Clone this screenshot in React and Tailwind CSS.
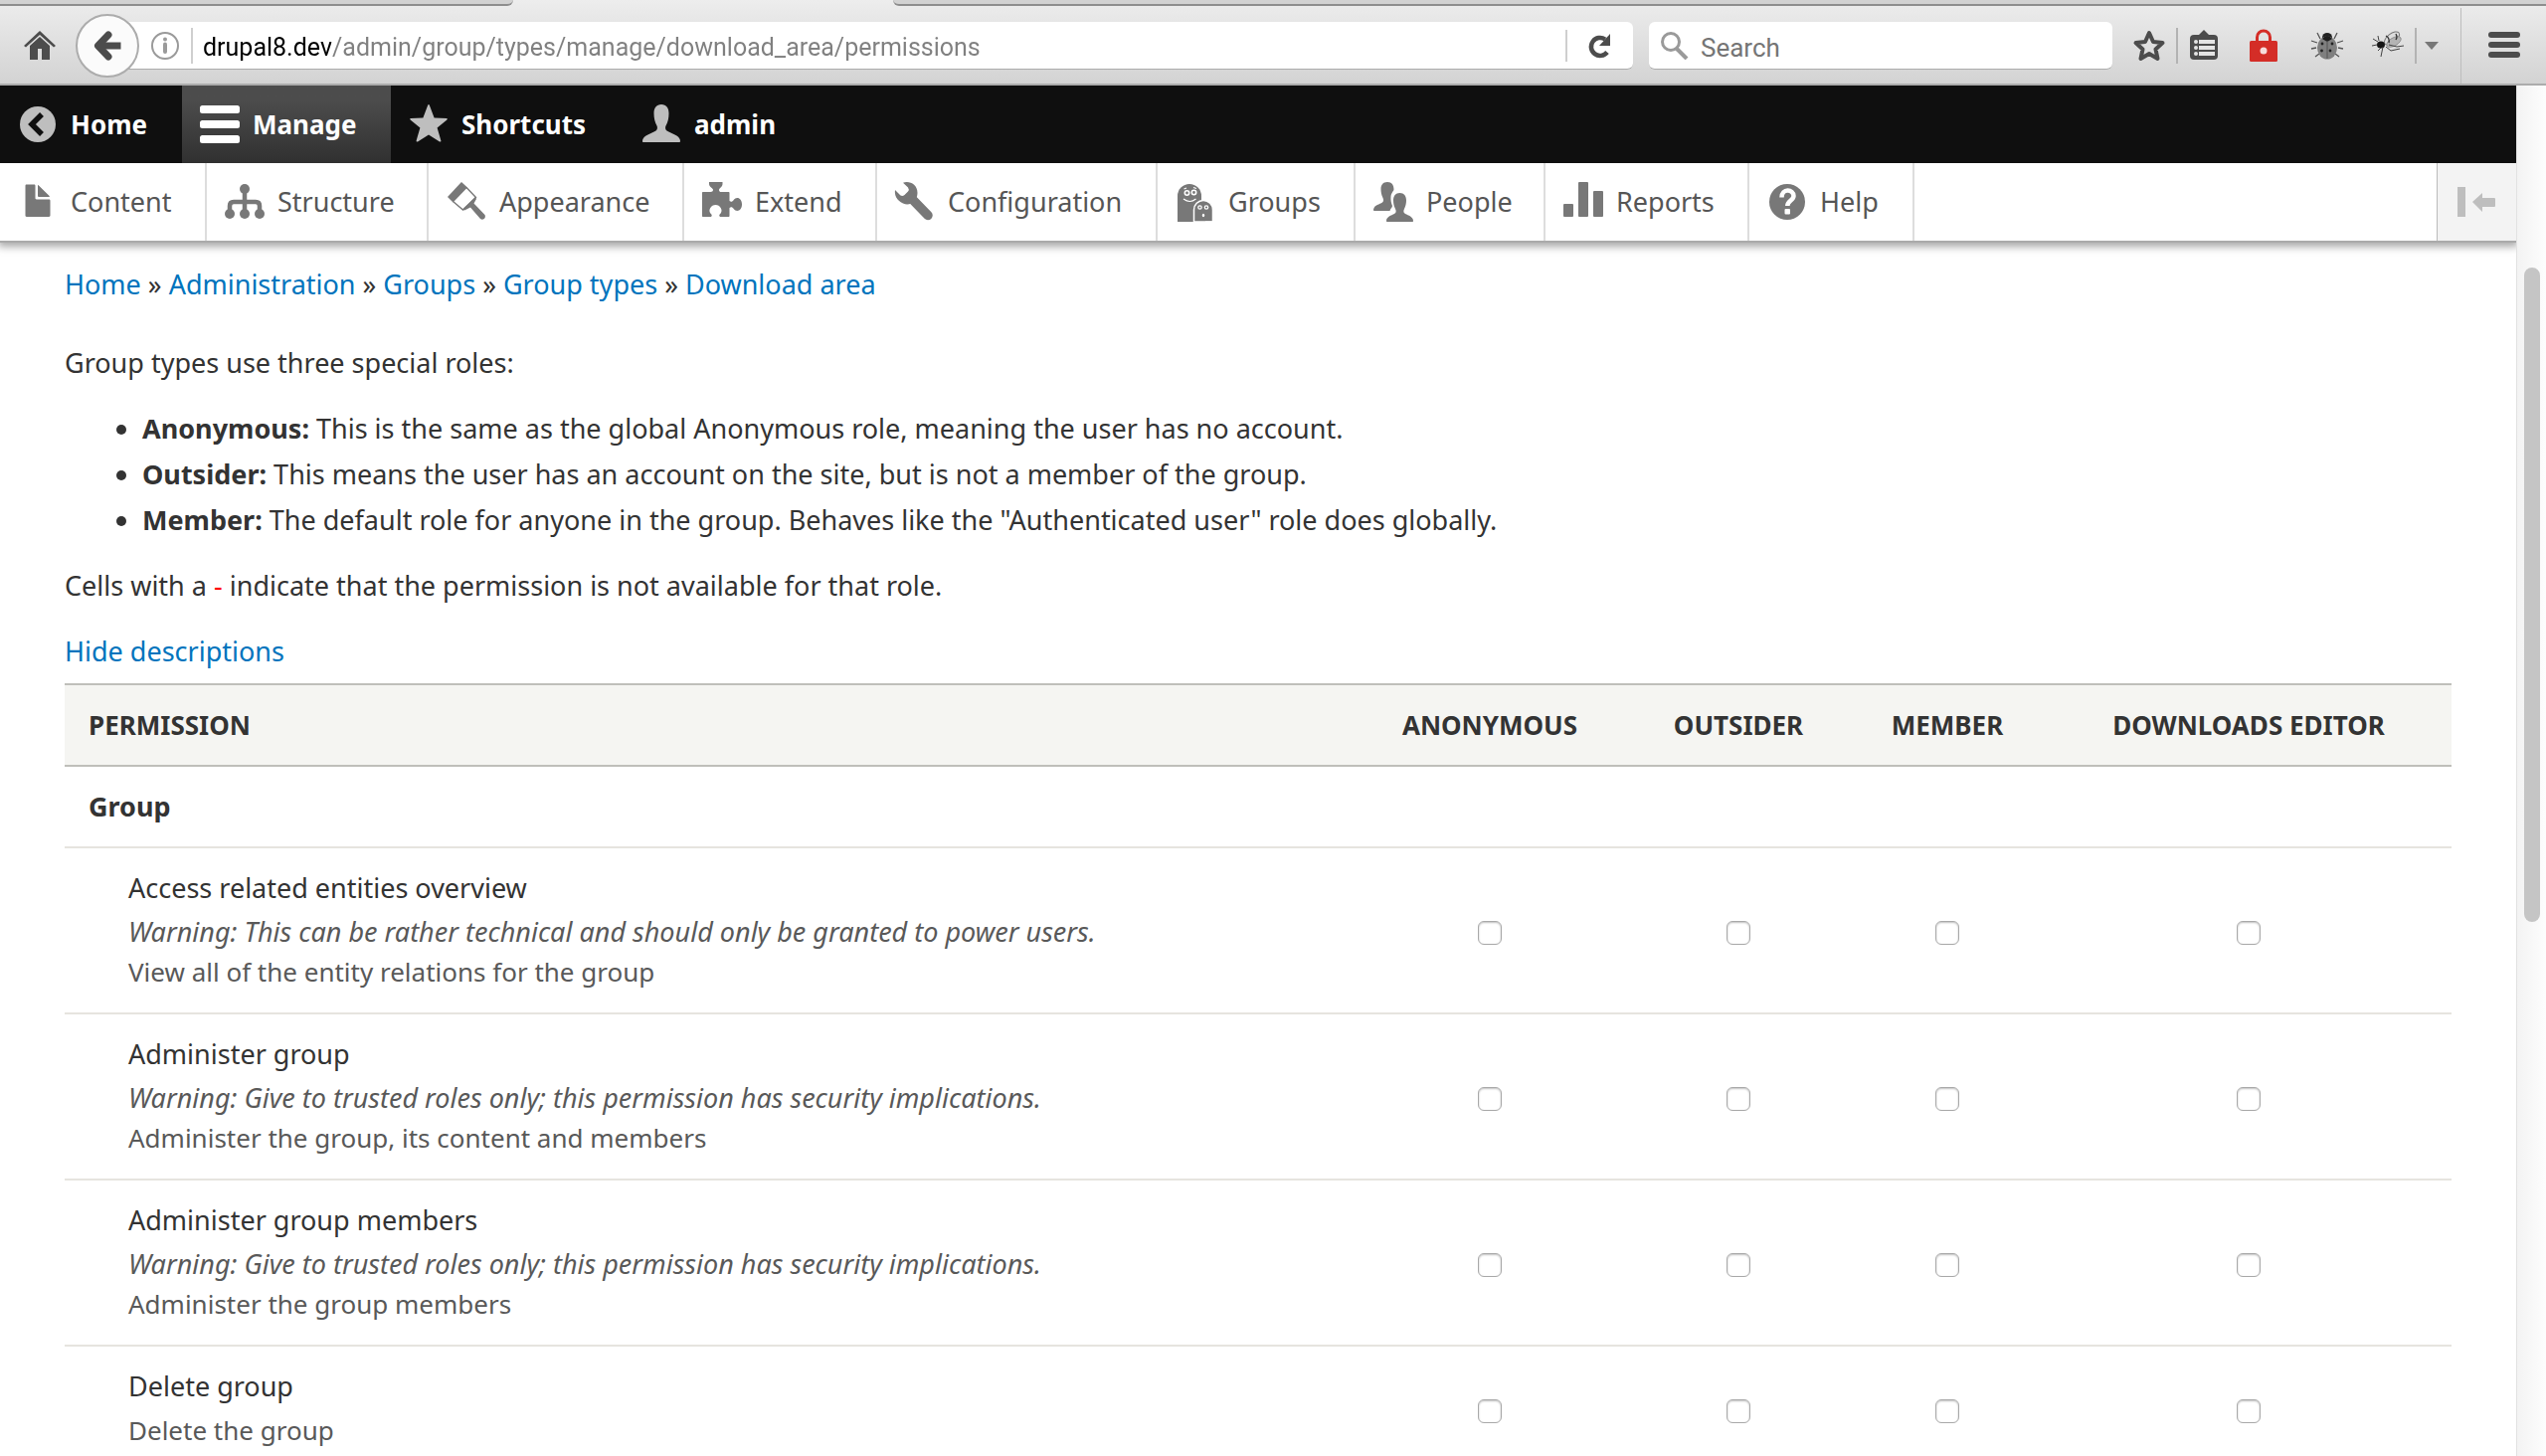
// Group type permissions page inside a browser window
import { useState } from 'react';

const ICONS = {
  back: (
    <>
      <circle cx="20" cy="20" r="18" />
      <path d="M24 10 14 20l10 10" fill="none" stroke="#0f0f0f" strokeWidth="5.5" />
    </>
  ),
  menu: (
    <>
      <rect x="0" y="1" width="40" height="8" rx="2.5" />
      <rect x="0" y="16" width="40" height="8" rx="2.5" />
      <rect x="0" y="31" width="40" height="8" rx="2.5" />
    </>
  ),
  star: <path d="M19.2.8Q20-.6 20.8.8L25.600 13.500 38 14q1.600.400.400 1.600L28.600 23.500 32.400 36.500q.2 1.600-1.400.9L20 30.500 9 37.400q-1.600.7-1.400-.9L11.400 23.500 1.600 15.600Q.4 14.400 2 14l12.400-.5z" />,
  user: <path d="M20 0c5 0 7.500 3.500 7.500 9 0 5-1 9-3 12.500-.8 1.500-.5 4 1 5 3 2 7 3 10 5 2.500 1.700 3.500 3.500 3.500 5.500 0 .7-.5 1-1 1H2c-.7 0-1-.4-1-1 0-2 1-3.800 3.500-5.500 3-2 7-3 10-5 1.500-1 1.800-3.500 1-5-2-3.500-3-7.500-3-12.500 0-5.500 2.500-9 7.500-9z" />,
  file: <path d="M31.200 17.500H18.700c-.7 0-1.200-.5-1.200-1.200V3.700c0-.7-.5-1.200-1.200-1.200H8.700c-.7 0-1.200.5-1.200 1.200v30.100c0 .7.5 1.200 1.200 1.200h22.500c.7 0 1.300-.5 1.300-1.200V18.700c0-.7-.6-1.200-1.300-1.200zM21.200 15h10c.7 0 .9-.4.400-.9L20.900 3.400c-.5-.5-.9-.3-.9.300v10c0 .8.600 1.300 1.200 1.300z" />,
  chart: (
    <>
      <path d="M5 32v-8q0-4 4-4h22q4 0 4 4v8M20 7v25" fill="none" stroke="currentColor" strokeWidth="4.500" />
      <circle cx="20" cy="7" r="5" />
      <circle cx="5" cy="32" r="5" />
      <circle cx="20" cy="32" r="5" />
      <circle cx="35" cy="32" r="5" />
    </>
  ),
  brush: (
    <>
      <path d="M15 0 21 5.500 6.500 20.500 1 15z" />
      <path d="M6.500 19.500 16.500 28 29.500 15.500 20 5.500" fill="none" stroke="currentColor" strokeWidth="1.400" />
      <path d="M16 27.500 29 15l1 2-2.500 4.500L38.500 33c1.500 3-1.500 6-4.500 4L24 25.500 18 28.500z" />
    </>
  ),
  puzzle: <path d="M7 0h13.500v2c0 3-3.500 4-3.500 6 0 1.500 1 2 2 2h7.500c.6 0 1 .4 1 1v8c1.500 1.200 3 .8 4-.8 3.500-4.500 8.500-1.500 8.500 4.300s-5 8.800-8.500 4.300c-1-1.600-2.500-2-4-.8v8c0 .6-.4 1-1 1H18c-1.500-1.500-.5-2.500.8-3.800C21 28 18 23 13.500 23S6 28 8.200 31.200C9.500 32.500 10.500 33.500 9 35H1c-.6 0-1-.4-1-1V11c0-.6.4-1 1-1h7.500c1.500 0 2.500-.8 2.500-2 0-2-4-3-4-6z" />,
  wrench: (
    <>
      <path d="M0 8l5.500 5.500Q7.500 14.500 9.500 13l3.500-3.500Q14.500 7.500 13 5.500L8 .8C14-1.500 22.500 2 22.500 11 22.500 19 15 25 8 21.500 1.500 18.500-.8 13 0 8z" />
      <path d="M16 16 33 33.500" stroke="currentColor" strokeWidth="9.500" strokeLinecap="round" />
    </>
  ),
  ghosts: (
    <>
      <path d="M2 40V14a12 12 0 0 1 24 0v26z" />
      <path d="M18.500 40V28a9.500 9.500 0 0 1 19 0v12z" stroke="#fff" strokeWidth="1.500" />
      <rect x="30" y="39.500" width="9" height="1" fill="#fff" stroke="none" />
      <g fill="none" stroke="#fff" strokeWidth="1.600">
        <circle cx="11.500" cy="11" r="2.200" />
        <circle cx="18.500" cy="10.500" r="2.200" />
        <path d="M8.500 7 11 6M18 5.500l3 1M8 17q6.500 5 12.500 0" strokeWidth="1.200" />
        <circle cx="24.500" cy="25.500" r="1.700" strokeWidth="1.300" />
        <circle cx="31" cy="25.500" r="1.700" strokeWidth="1.300" />
      </g>
      <ellipse cx="28" cy="33.500" rx="1.200" ry="1.800" fill="#fff" />
    </>
  ),
  people: (
    <>
      <path d="M14 0c4.500 0 6.500 3 6.500 7.500 0 1.500-2.500 3-3 7-.4 4 .5 7 1.500 9.500 0 1.500-2 3-2.500 5H.8C0 29-.2 28 .2 27c1-4 6-4.500 8.800-6.500 1.500-1.200 1.200-3 .5-4.500C8 13 7.500 10 7.500 7 7.500 2.800 9.800 0 14 0z" />
      <path d="M26.500 11c4.200 0 6.500 3 6.500 7.500 0 3-.7 6-2 8.500-1 2-1 4 1 5 3 1.500 8 3 8 7 0 .7-.3 1-1 1H14c-.7 0-1-.3-1-1 0-4 5-5.500 8-7 2-1 2-3 1-5-1.300-2.500-2-5.500-2-8.500 0-4.500 2.300-7.500 6.500-7.500z" />
    </>
  ),
  bars: (
    <>
      <rect x="0" y="22" width="10" height="13" rx="1" />
      <rect x="15" y="0" width="10" height="35" rx="1" />
      <rect x="30" y="9" width="10" height="26" rx="1" />
    </>
  ),
  help: (
    <>
      <circle cx="20" cy="20" r="18" />
      <path d="M14.500 15.500c0-9.500 12-8.500 12-1.500 0 4.500-6.200 4.500-6.200 10" fill="none" stroke="#fff" strokeWidth="4.500" />
      <rect x="17.500" y="27" width="5.500" height="5.500" rx="1" fill="#fff" />
    </>
  ),
};

const BAR_ITEMS = [
  { label: 'Home', icon: 'back', width: 'w-[183px]' },
  { label: 'Manage', icon: 'menu', width: 'w-[210px]', active: true },
  { label: 'Shortcuts', icon: 'star', width: 'w-[234px]' },
  { label: 'admin', icon: 'user', width: 'w-[186px]' },
];

const TRAY_ITEMS = [
  { label: 'Content', icon: 'file', width: 'w-[208px]' },
  { label: 'Structure', icon: 'chart', width: 'w-[223px]' },
  { label: 'Appearance', icon: 'brush', width: 'w-[257px]' },
  { label: 'Extend', icon: 'puzzle', width: 'w-[194px]' },
  { label: 'Configuration', icon: 'wrench', width: 'w-[282px]' },
  { label: 'Groups', icon: 'ghosts', width: 'w-[199px]' },
  { label: 'People', icon: 'people', width: 'w-[191px]' },
  { label: 'Reports', icon: 'bars', width: 'w-[205px]' },
  { label: 'Help', icon: 'help', width: 'w-[166px]' },
];

const BREADCRUMB = ['Home', 'Administration', 'Groups', 'Group types', 'Download area'];

const ROLES = [
  { name: 'Anonymous', width: 'w-[278px]' },
  { name: 'Outsider', width: 'w-[222px]' },
  { name: 'Member', width: 'w-[198px]' },
  { name: 'Downloads editor', width: 'w-[408px]' },
];

const PERMISSIONS = [
  {
    title: 'Access related entities overview',
    warning: 'Warning: This can be rather technical and should only be granted to power users.',
    desc: 'View all of the entity relations for the group',
  },
  {
    title: 'Administer group',
    warning: 'Warning: Give to trusted roles only; this permission has security implications.',
    desc: 'Administer the group, its content and members',
  },
  {
    title: 'Administer group members',
    warning: 'Warning: Give to trusted roles only; this permission has security implications.',
    desc: 'Administer the group members',
  },
  { title: 'Delete group', desc: 'Delete the group' },
];

const Icon = ({ name, className }) => (
  <svg viewBox="0 0 40 40" fill="currentColor" aria-hidden="true" className={`size-10 shrink-0 overflow-visible ${className}`}>
    {ICONS[name]}
  </svg>
);

const ToolButton = ({ label, className = '', children }) => (
  <button type="button" aria-label={label} className={`flex size-8 shrink-0 items-center justify-center text-[#4c4c4c] ${className}`}>
    <svg viewBox="0 0 32 32" fill="currentColor" className="size-8 overflow-visible">{children}</svg>
  </button>
);

const BrowserChrome = () => (
  <header className="shrink-0 border-b-2 border-[#acacac] bg-linear-to-b from-[#ededed] to-[#d3d3d3]">
    {/* bottom edge of the tab strip */}
    <div className="flex h-2 justify-between">
      <div className="h-[6px] w-[516px] rounded-br-xl border-b-2 border-[#8e8e8e] bg-[#d2d2d2]" />
      <div className="ml-[382px] h-[6px] flex-1 rounded-bl-xl border-b-2 border-[#8e8e8e] bg-[#d2d2d2]" />
    </div>
    <div className="flex h-[76px] items-center">
      <ToolButton label="Home page" className="ml-6">
        <path d="M16 1 32 16l-2 1.500L16 5 2 17.500 0 16zM6 16 16 7l10 9v14h-8V19h-4v11H6z" />
      </ToolButton>
      <button type="button" aria-label="Back" className="relative z-10 ml-5 flex size-16 shrink-0 items-center justify-center rounded-full border-2 border-[#acacac] bg-[#fbfbfb]">
        <svg viewBox="0 0 28 32" className="h-8 w-7" fill="none" stroke="#4c4c4c" strokeWidth="7" strokeLinecap="round" strokeLinejoin="round">
          <path d="M15 5 4.500 16 15 27" />
          <path d="M8 16h16" strokeLinecap="square" />
        </svg>
      </button>
      <div className="-ml-6 flex h-12 flex-1 items-center rounded-r-md border-b border-[#acacac] bg-white pl-9">
        <svg viewBox="0 0 28 28" className="size-7 shrink-0" fill="none" stroke="#9a9a9a" strokeWidth="2">
          <circle cx="14" cy="14" r="13" />
          <path d="M14 12.500v7.500" strokeWidth="4" strokeLinecap="round" />
          <circle cx="14" cy="7.500" r="2" fill="#9a9a9a" stroke="none" />
        </svg>
        <span className="ml-3 h-9 w-[2px] bg-[#cfcfcf]" />
        <input
          aria-label="Address"
          defaultValue="drupal8.dev/admin/group/types/manage/download_area/permissions"
          className="ml-[10px] min-w-0 flex-1 bg-[linear-gradient(to_right,#000_129px,#808080_129px)] bg-clip-text pt-1 font-['Roboto',sans-serif] text-[25px] text-transparent outline-none"
        />
        <span className="h-8 w-[2px] bg-[#cfcfcf]" />
        <button type="button" aria-label="Reload" className="px-5">
          <svg viewBox="0 0 26 26" className="size-[26px]">
            <path d="M20 19.500A9 9 0 1 1 18 6.500" fill="none" stroke="#4c4c4c" strokeWidth="4.500" />
            <path d="M23 1v12H12z" fill="#4c4c4c" />
          </svg>
        </button>
      </div>
      <div className="ml-4 flex h-12 w-[466px] items-center rounded-md border-b border-[#acacac] bg-white pl-3">
        <svg viewBox="0 0 28 28" className="size-7 shrink-0" fill="none" stroke="#9a9a9a">
          <circle cx="10" cy="10" r="8.500" strokeWidth="3" />
          <path d="m16 17 10 10" strokeWidth="4" />
        </svg>
        <input aria-label="Search the web" placeholder="Search" className="ml-3 min-w-0 flex-1 pt-1 font-['Roboto',sans-serif] text-[26px] outline-none placeholder:text-[#757575]" />
      </div>
      <ToolButton label="Bookmark this page" className="ml-[21px]">
        <path d="m16 3 4 9 9.500 1-7 6.500 2 9.500-8.500-5-8.500 5 2-9.500-7-6.500 9.500-1z" fill="none" stroke="currentColor" strokeWidth="4" strokeLinejoin="round" />
      </ToolButton>
      <span className="ml-[11px] h-9 w-[2px] bg-[#b3b3b3]" />
      <ToolButton label="Show bookmarks" className="ml-[10px]">
        <path d="m16 0 6 6H10z" />
        <rect x="2" y="5" width="28" height="25" rx="4" />
        <g fill="#e4e4e4">
          <circle cx="8" cy="12" r="2" />
          <circle cx="8" cy="18" r="2" />
          <circle cx="8" cy="24" r="2" />
          <rect x="11" y="10" width="16" height="4" />
          <rect x="11" y="16" width="16" height="4" />
          <rect x="11" y="22" width="16" height="4" />
        </g>
      </ToolButton>
      <ToolButton label="Password manager" className="ml-7 text-[#d42d27]!">
        <path d="M9.500 13V7.500a6.500 6.500 0 0 1 13 0V13" fill="none" stroke="currentColor" strokeWidth="3" />
        <rect x="2" y="11" width="28" height="21" rx="1.500" />
        <circle cx="16" cy="21" r="3.500" fill="#f6dcdb" />
      </ToolButton>
      <ToolButton label="Debugger" className="ml-8">
        <path d="M9 9 6 3M23 9l3-6M6 13l-6-2M26 13l6-2M5 18l-5 1M27 18l5 1M8 24l-4 3M24 24l4 3" stroke="#555" strokeWidth="1.300" fill="none" />
        <ellipse cx="16" cy="7.500" rx="5" ry="4.500" fill="#222" />
        <ellipse cx="16" cy="18" rx="10" ry="11.500" fill="#7f7f7f" />
        <path d="M11 9q5-6 10 0l-5 3z" fill="#1e1e1e" />
        <path d="M16 11v18" stroke="#555" strokeWidth="1" />
        <g fill="#222">
          <circle cx="11" cy="14" r="1.400" />
          <circle cx="21" cy="14" r="1.400" />
          <circle cx="10.500" cy="21" r="1.400" />
          <circle cx="19" cy="21" r="1.400" />
        </g>
      </ToolButton>
      <ToolButton label="Inspector" className="ml-[29px]">
        <ellipse cx="20" cy="8.500" rx="9" ry="4.500" transform="rotate(-38 20 8.500)" fill="#dcdcdc" stroke="#777" strokeWidth="1" />
        <ellipse cx="22" cy="12" rx="8" ry="4" transform="rotate(-30 22 12)" fill="#b4b4b4" stroke="#888" strokeWidth=".8" />
        <path d="M14 6q4 2 3 7M24 4q2 3 0 6" stroke="#333" strokeWidth="1.300" fill="none" />
        <ellipse cx="9" cy="15" rx="4" ry="3.500" fill="#151515" />
        <path d="M6 12 1 9M5 15l-5 1M9 18l-3 3M11 17l-2 10M14 17l5 4 9-2M17 15l8 2 7-1M7 11 6 6" stroke="#444" strokeWidth="1" fill="none" />
      </ToolButton>
      <span className="ml-[11px] h-9 w-[2px] bg-[#b3b3b3]" />
      <button type="button" aria-label="More tools" className="ml-2">
        <svg viewBox="0 0 14 8" className="h-2 w-[14px]"><path d="M0 0h14L7 8z" fill="#777" /></svg>
      </button>
      <span className="ml-[22px] h-full w-px bg-[#bdbdbd]" />
      <ToolButton label="Open menu" className="mr-[26px] ml-[27px]">
        <rect x="0" y="2" width="32" height="6" rx="3" />
        <rect x="0" y="12" width="32" height="6" rx="3" />
        <rect x="0" y="22" width="32" height="6" rx="3" />
      </ToolButton>
    </div>
  </header>
);

const AdminToolbar = () => (
  <div className="relative z-10 shadow-[0_2px_8px_2px_rgba(0,0,0,0.35)]">
    <nav className="flex h-[78px] bg-[#0f0f0f]">
      {BAR_ITEMS.map((item) => (
        <a
          key={item.label}
          href="#"
          className={`flex items-center pl-[18px] text-[26px] font-bold text-white ${item.width} ${item.active ? 'bg-linear-to-b from-[#4c4c4c] from-20% to-[#303030]' : ''}`}
        >
          <Icon name={item.icon} className={item.active ? 'mr-[13px] text-white' : 'mr-[13px] text-[#bebebe]'} />
          <span>{item.label}</span>
        </a>
      ))}
    </nav>
    <nav className="flex h-20 border-b-2 border-[#aaa] bg-white">
      {TRAY_ITEMS.map((item) => (
        <a key={item.label} href="#" className={`flex items-center border-r-2 border-[#ddd] pl-[18px] text-[27px] text-[#565656] ${item.width}`}>
          <Icon name={item.icon} className="mr-[13px] text-[#787878]" />
          <span>{item.label}</span>
        </a>
      ))}
      <button type="button" aria-label="Vertical orientation" className="ml-auto flex w-20 items-center border-l border-[#bbb] bg-[#f3f3f3] pl-5">
        <svg viewBox="0 0 40 32" className="h-8 w-10" fill="#bebebe">
          <rect x="0" y="1" width="8" height="30" />
          <path d="M15 16 25 7v5h12q1 0 1 1v7q0 1-1 1H25v5z" />
        </svg>
      </button>
    </nav>
  </div>
);

const PermissionsTable = () => {
  const [checked, setChecked] = useState({});
  const toggle = (key) => setChecked((prev) => ({ ...prev, [key]: !prev[key] }));

  return (
    <table className="mt-3 w-full table-fixed border-collapse">
      <thead>
        <tr className="h-[82px] border-y-2 border-[#bfbfba] bg-[#f5f5f2] text-[26px] uppercase">
          <th className="px-6 text-left">Permission</th>
          {ROLES.map((role, c) => (
            <th key={role.name} id={`role-${c}`} className={role.width}>{role.name}</th>
          ))}
        </tr>
      </thead>
      <tbody>
        <tr className="h-[82px] border-b-2 border-[#e6e4df]">
          <td colSpan={5} className="px-6 font-bold">Group</td>
        </tr>
        {PERMISSIONS.map((perm, r) => (
          <tr key={perm.title} className="border-b-2 border-[#e6e4df]">
            <td className="pt-5 pb-[21px] pl-16">
              <div id={`perm-${r}`} className="leading-10">{perm.title}</div>
              <div className="mt-1 text-[26px] leading-10 text-[#595959]">
                {perm.warning && <em className="block text-[27px]">{perm.warning}</em>}
                {perm.desc}
              </div>
            </td>
            {ROLES.map((role, c) => (
              <td key={role.name} className="text-center">
                <input
                  type="checkbox"
                  aria-labelledby={`perm-${r} role-${c}`}
                  checked={!!checked[`${r}-${c}`]}
                  onChange={() => toggle(`${r}-${c}`)}
                  className="size-6 appearance-none rounded-md border border-[#a9a9a9] bg-white align-middle shadow-[inset_0_1px_2px_rgba(0,0,0,0.25)] checked:bg-[#0074bd]"
                />
              </td>
            ))}
          </tr>
        ))}
      </tbody>
    </table>
  );
};

const App = () => (
  <div className="flex h-screen flex-col overflow-hidden bg-white font-['Noto_Sans',sans-serif] text-[27px] leading-10 text-[#333]">
    <BrowserChrome />
    <div className="flex min-h-0 flex-1">
      <div className="min-w-0 flex-1 overflow-hidden">
        <AdminToolbar />
        <main className="px-[65px] pt-[22px]">
          <nav>
            {BREADCRUMB.map((crumb, i) => (
              <span key={crumb}>
                {i > 0 && ' » '}
                <a href="#" className="text-[#0074bd]">{crumb}</a>
              </span>
            ))}
          </nav>
          <p className="mt-[39px]">Group types use three special roles:</p>
          <ul className="mt-[26px] list-disc space-y-[6px] pl-[78px]">
            <li><strong>Anonymous:</strong> This is the same as the global Anonymous role, meaning the user has no account.</li>
            <li><strong>Outsider:</strong> This means the user has an account on the site, but is not a member of the group.</li>
            <li><strong>Member:</strong> The default role for anyone in the group. Behaves like the "Authenticated user" role does globally.</li>
          </ul>
          <p className="mt-[26px]">Cells with a <span className="text-[#f00]">-</span> indicate that the permission is not available for that role.</p>
          <button type="button" className="mt-[26px] block text-[#0074bd]">Hide descriptions</button>
          <PermissionsTable />
        </main>
      </div>
      {/* scrollbar */}
      <div className="w-[30px] shrink-0 border-l border-[#e2e2e2] bg-linear-to-r from-[#f3f3f3] to-[#fdfdfd] pt-[183px] pl-[7px]">
        <div className="h-[658px] w-4 rounded-full bg-[#c5c5c5]" />
      </div>
    </div>
  </div>
);

export default App;
